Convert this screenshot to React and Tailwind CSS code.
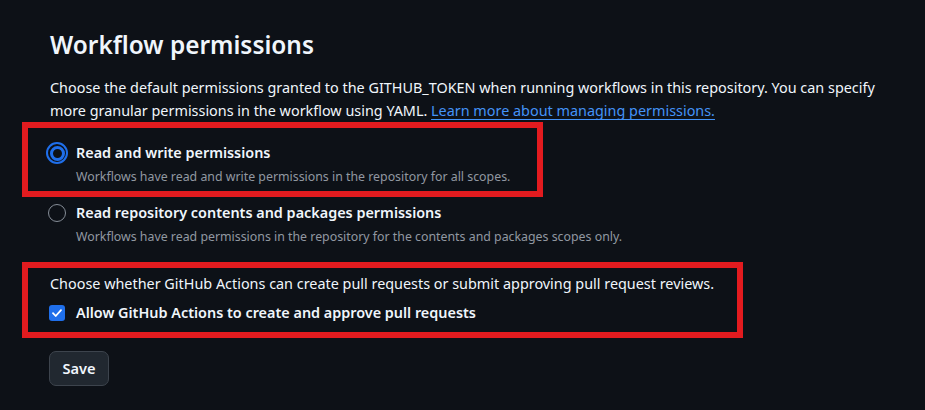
const font = { fontFamily: '"Noto Sans", "Liberation Sans", sans-serif' };

function Radio({ checked }) {
  if (checked) {
    return (
      <span className="w-[22px] h-[22px] rounded-full border-2 border-[#1f6feb] flex items-center justify-center">
        <span className="w-[15px] h-[15px] rounded-full border-[3.5px] border-[#1f6feb] bg-[#0d1117]" />
      </span>
    );
  }
  return <span className="w-[18px] h-[18px] rounded-full border border-[#858d97] bg-[#0d1117]" />;
}

function Checkbox() {
  return (
    <span className="w-[16px] h-[16px] rounded-[3px] bg-[#1f6feb] flex items-center justify-center">
      <svg width="12" height="12" viewBox="0 0 12 12" fill="none">
        <path d="M2 6.2 4.7 9 10 3.2" stroke="#fff" strokeWidth="1.8" strokeLinecap="round" strokeLinejoin="round" />
      </svg>
    </span>
  );
}

function Option({ checked, label, desc }) {
  return (
    <div className="flex items-start">
      <div className="w-[22px] h-[20px] flex items-center justify-center">
        <Radio checked={checked} />
      </div>
      <div className="ml-[8px]">
        <div className="text-[14.4px] leading-[20px] font-semibold text-[#f0f6fc]">{label}</div>
        <div className="mt-[5px] text-[12.35px] leading-[18px] text-[#9198a1]">{desc}</div>
      </div>
    </div>
  );
}

export default function App() {
  return (
    <div style={font} className="w-[925px] min-h-[410px] bg-[#0d1117] pt-[27px] pl-[50px] text-[#f0f6fc]">
      <h2 className="text-[24.4px] leading-[36px] font-semibold">Workflow permissions</h2>
      <p className="mt-[13px] max-w-[840px] text-[14.4px] leading-[23px]">
        Choose the default permissions granted to the GITHUB_TOKEN when running workflows in this repository. You can specify more granular permissions in the workflow using YAML.{' '}
        <a className="text-[#4493f8] underline underline-offset-[3px]">Learn more about managing permissions.</a>
      </p>

      {/* highlighted: read and write */}
      <div className="-ml-[28px] w-[521px] border-[6px] border-[#e21b1f] pl-[18px] pt-[15px] pb-[5px]">
        <Option
          checked
          label="Read and write permissions"
          desc="Workflows have read and write permissions in the repository for all scopes."
        />
      </div>

      <div className="-ml-[4px] mt-[6px]">
        <Option
          label="Read repository contents and packages permissions"
          desc="Workflows have read permissions in the repository for the contents and packages scopes only."
        />
      </div>

      {/* highlighted: pull requests */}
      <div className="-ml-[28px] mt-[16px] w-[721px] border-[6px] border-[#e21b1f] pl-[18px] pt-[5px] pb-[9px]">
        <p className="ml-[4px] text-[14.4px] leading-[22px]">
          Choose whether GitHub Actions can create pull requests or submit approving pull request reviews.
        </p>
        <div className="mt-[8px] flex items-center">
          <div className="w-[22px] h-[20px] flex items-center justify-center">
            <Checkbox />
          </div>
          <span className="ml-[8px] text-[14.4px] leading-[20px] font-semibold">
            Allow GitHub Actions to create and approve pull requests
          </span>
        </div>
      </div>

      <button className="-ml-[1px] mt-[13px] w-[60px] h-[35px] rounded-[7px] border border-[#3d444d] bg-[#212830] text-[14.6px] font-semibold text-[#f0f6fc]">
        Save
      </button>
    </div>
  );
}
